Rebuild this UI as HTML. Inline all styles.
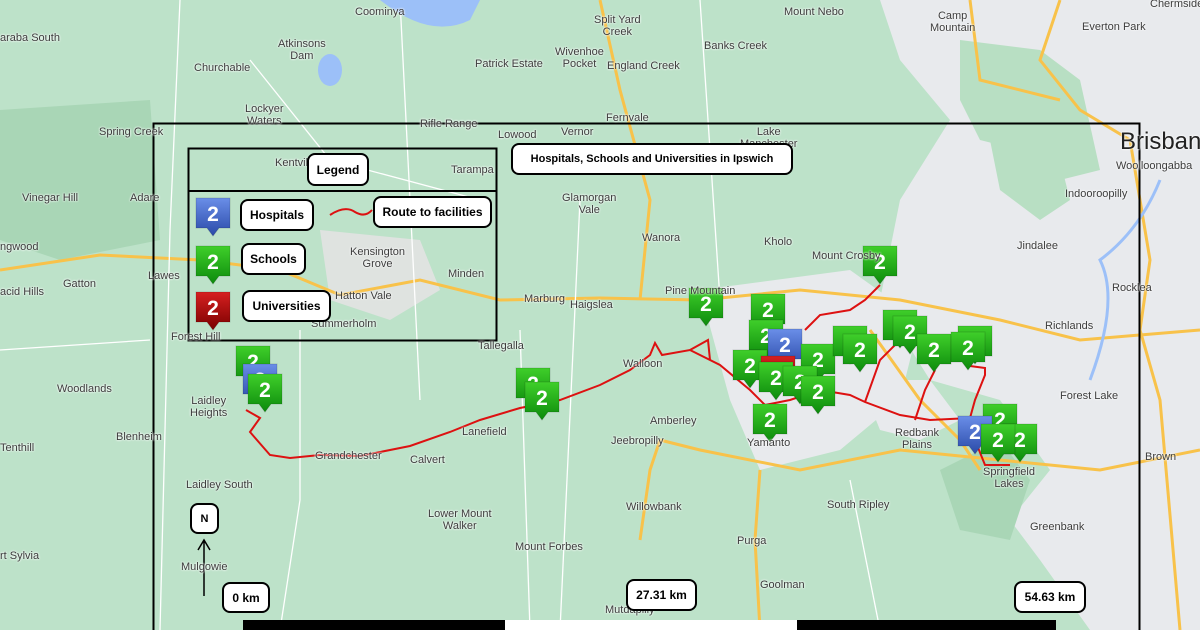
<!DOCTYPE html>
<html><head><meta charset="utf-8"><style>
body{margin:0;width:1200px;height:630px;overflow:hidden;font-family:"Liberation Sans",sans-serif}
.l{position:absolute;font-size:11px;color:#3c3c3c;text-shadow:0 0 2px #fff,0 0 2px #fff;white-space:nowrap;line-height:12px;text-align:center}
.b{position:absolute;background:#fff;border:2px solid #000;border-radius:8px;font-weight:bold;font-size:12px;color:#000;display:flex;align-items:center;justify-content:center;box-sizing:border-box}
</style></head><body>
<svg width="1200" height="630" style="position:absolute;left:0;top:0">
<defs>
<linearGradient id="g" x1="0" y1="0" x2="0" y2="1"><stop offset="0" stop-color="#3fcf2a"/><stop offset="1" stop-color="#0c8a0c"/></linearGradient>
<linearGradient id="bl" x1="0" y1="0" x2="0" y2="1"><stop offset="0" stop-color="#6a8ee8"/><stop offset="1" stop-color="#2a4aa8"/></linearGradient>
<linearGradient id="r" x1="0" y1="0" x2="0" y2="1"><stop offset="0" stop-color="#d62020"/><stop offset="1" stop-color="#7a0000"/></linearGradient>
</defs>
<rect width="1200" height="630" fill="#bde2c9"/>
<path d="M0 110 L150 100 L160 240 L60 260 L0 240Z" fill="#a9d6b6"/>
<path d="M880 0 L1200 0 L1200 630 L1090 630 L1040 560 L1010 520 L1050 470 L1000 400 L930 380 L880 300 L900 200 L950 120 L900 60Z" fill="#e8eaed"/>
<path d="M960 40 L1040 50 L1080 80 L1100 170 L1060 180 L1020 150 L980 140 L960 100Z" fill="#b8dfc3"/>
<path d="M990 140 L1060 160 L1070 200 L1040 220 L1000 190Z" fill="#b8dfc3"/>
<path d="M1050 330 L1120 340 L1140 420 L1100 450 L1060 400Z" fill="#e8eaed"/>
<path d="M700 290 L850 270 L920 320 L900 400 L840 450 L760 470 L730 400Z" fill="#e8eaed"/>
<path d="M860 380 L930 380 L960 420 L920 440 L880 430Z" fill="#e8eaed"/>
<path d="M320 230 L420 240 L440 290 L390 320 L330 300Z" fill="#dfe3e0"/>
<path d="M940 470 L1000 440 L1030 480 L1010 540 L960 530Z" fill="#a9d6b6"/>
<g fill="none" stroke="#f8c24a" stroke-width="3">
<path d="M0 270 L100 255 L200 260 L280 270 L340 295 L420 280 L500 300 L600 298 L700 300 L800 290 L900 300 L1000 320 L1080 340 L1200 330"/>
<path d="M660 440 L700 450 L800 470 L900 450 L1000 460 L1100 470 L1200 450"/>
<path d="M640 540 L650 470 L660 440"/>
<path d="M760 630 L755 540 L760 470"/>
<path d="M640 300 L650 200 L620 90 L600 0"/>
<path d="M870 330 L920 400 L960 440 L980 470"/>
<path d="M1060 0 L1040 60 L1080 110 L1130 140 L1150 260 L1140 330 L1160 400 L1180 630"/>
<path d="M970 0 L980 80 L1060 100"/>
</g>
<g fill="none" stroke="#fff" stroke-width="1.3">
<path d="M180 0 L170 230 L160 630"/><path d="M400 0 L410 200 L420 400"/><path d="M520 330 L530 630"/><path d="M580 200 L560 630"/>
<path d="M0 350 L150 340"/><path d="M300 330 L300 500 L280 630"/><path d="M850 480 L880 630"/><path d="M700 0 L720 300"/><path d="M250 60 L330 160 L480 200"/>
</g>
<path d="M380 0 Q430 40 470 20 L480 0Z" fill="#9cc0f8"/>
<ellipse cx="330" cy="70" rx="12" ry="16" fill="#9cc0f8"/>
<path d="M1090 380 Q1120 300 1100 260 Q1140 230 1160 180" stroke="#9cc0f8" stroke-width="3" fill="none"/>
<g fill="none" stroke="#d11" stroke-width="2">
<path d="M246 410 L260 418 L250 432 L270 455 L290 458 L320 455 L360 456 L410 446 L450 432 L480 420 L520 408 L560 400 L600 385 L630 370 L650 355 L655 343 L662 355 L690 350 L720 365 L750 390 L765 405 L790 400 L820 390 L850 395 L865 402 L900 415 L930 420 L970 418 L975 400 L985 375 L985 368 L970 366"/>
<path d="M690 350 L708 340 L710 360"/>
<path d="M805 330 L820 315 L850 310 L865 300 L880 285"/>
<path d="M865 402 L880 360 L900 340"/>
<path d="M915 420 L925 390 L935 370"/>
<path d="M975 440 L985 465 L1010 465"/>
<path d="M330 215 Q345 205 355 212 Q365 218 372 210"/>
</g>
<rect x="153.5" y="123.5" width="986" height="520" fill="none" stroke="#000" stroke-width="2"/>
<rect x="188.5" y="148.5" width="308" height="192" fill="none" stroke="#000" stroke-width="2"/>
<line x1="188" y1="191" x2="497" y2="191" stroke="#000" stroke-width="2"/>
<rect x="243" y="620" width="262" height="10" fill="#000"/><rect x="505" y="620" width="292" height="10" fill="#fff"/><rect x="797" y="620" width="259" height="10" fill="#000"/>
<path d="M204 596 L204 540 M198 550 L204 540 L210 550" stroke="#000" stroke-width="1.5" fill="none"/>
<g font-family="Liberation Sans" font-weight="bold" font-size="21" fill="#fff" text-anchor="middle" id="m"></g>
</svg>
<script>
var M=[["bl",213,214],["g",213,262],["r",213,308],["g",253,362],["bl",260,380],["g",265,390],["g",533,384],["g",542,398],["g",706,304],["g",768,310],["g",766,336],["bl",785,345],["g",818,360],["g",750,366],["r",778,372],["g",776,378],["g",800,382],["g",818,392],["g",770,420],["g",850,342],["g",860,350],["g",880,262],["g",900,326],["g",910,332],["g",934,350],["g",975,342],["g",968,348],["g",1000,420],["bl",975,432],["g",1020,440],["g",998,440]];
var s="";M.forEach(function(a){var x=a[1],y=a[2];s+='<path d="M'+(x-17)+' '+(y-16)+' h34 v30 h-11 l-6 8 l-6 -8 h-11z" fill="url(#'+a[0]+')" stroke="rgba(0,0,0,.15)"/><text x="'+x+'" y="'+(y+7)+'">2</text>';});
document.getElementById('m').innerHTML=s;
</script>
<div class="l" style="left:355px;top:6px">Coominya</div>
<div class="l" style="left:594px;top:14px">Split Yard<br>Creek</div>
<div class="l" style="left:784px;top:6px">Mount Nebo</div>
<div class="l" style="left:930px;top:10px">Camp<br>Mountain</div>
<div class="l" style="left:1082px;top:21px">Everton Park</div>
<div class="l" style="left:1150px;top:-2px">Chermside</div>
<div class="l" style="left:0px;top:32px">araba South</div>
<div class="l" style="left:278px;top:38px">Atkinsons<br>Dam</div>
<div class="l" style="left:194px;top:62px">Churchable</div>
<div class="l" style="left:475px;top:58px">Patrick Estate</div>
<div class="l" style="left:555px;top:46px">Wivenhoe<br>Pocket</div>
<div class="l" style="left:607px;top:60px">England Creek</div>
<div class="l" style="left:704px;top:40px">Banks Creek</div>
<div class="l" style="left:245px;top:103px">Lockyer<br>Waters</div>
<div class="l" style="left:420px;top:118px">Rifle Range</div>
<div class="l" style="left:498px;top:129px">Lowood</div>
<div class="l" style="left:561px;top:126px">Vernor</div>
<div class="l" style="left:606px;top:112px">Fernvale</div>
<div class="l" style="left:740px;top:126px">Lake<br>Manchester</div>
<div class="l" style="left:99px;top:126px">Spring Creek</div>
<div class="l" style="left:1120px;top:128px;font-size:24px;line-height:28px;color:#222">Brisbane</div>
<div class="l" style="left:1116px;top:160px">Woolloongabba</div>
<div class="l" style="left:22px;top:192px">Vinegar Hill</div>
<div class="l" style="left:130px;top:192px">Adare</div>
<div class="l" style="left:275px;top:157px">Kentville</div>
<div class="l" style="left:451px;top:164px">Tarampa</div>
<div class="l" style="left:562px;top:192px">Glamorgan<br>Vale</div>
<div class="l" style="left:1065px;top:188px">Indooroopilly</div>
<div class="l" style="left:0;top:241px">ngwood</div>
<div class="l" style="left:642px;top:232px">Wanora</div>
<div class="l" style="left:764px;top:236px">Kholo</div>
<div class="l" style="left:812px;top:250px">Mount Crosby</div>
<div class="l" style="left:1017px;top:240px">Jindalee</div>
<div class="l" style="left:350px;top:246px">Kensington<br>Grove</div>
<div class="l" style="left:448px;top:268px">Minden</div>
<div class="l" style="left:148px;top:270px">Lawes</div>
<div class="l" style="left:63px;top:278px">Gatton</div>
<div class="l" style="left:0;top:286px">acid Hills</div>
<div class="l" style="left:1112px;top:282px">Rocklea</div>
<div class="l" style="left:335px;top:290px">Hatton Vale</div>
<div class="l" style="left:524px;top:293px">Marburg</div>
<div class="l" style="left:570px;top:299px">Haigslea</div>
<div class="l" style="left:665px;top:285px">Pine Mountain</div>
<div class="l" style="left:311px;top:318px">Summerholm</div>
<div class="l" style="left:1045px;top:320px">Richlands</div>
<div class="l" style="left:171px;top:331px">Forest Hill</div>
<div class="l" style="left:478px;top:340px">Tallegalla</div>
<div class="l" style="left:623px;top:358px">Walloon</div>
<div class="l" style="left:57px;top:383px">Woodlands</div>
<div class="l" style="left:1060px;top:390px">Forest Lake</div>
<div class="l" style="left:190px;top:395px">Laidley<br>Heights</div>
<div class="l" style="left:650px;top:415px">Amberley</div>
<div class="l" style="left:462px;top:426px">Lanefield</div>
<div class="l" style="left:116px;top:431px">Blenheim</div>
<div class="l" style="left:611px;top:435px">Jeebropilly</div>
<div class="l" style="left:747px;top:437px">Yamanto</div>
<div class="l" style="left:895px;top:427px">Redbank<br>Plains</div>
<div class="l" style="left:0;top:442px">Tenthill</div>
<div class="l" style="left:315px;top:450px">Grandchester</div>
<div class="l" style="left:410px;top:454px">Calvert</div>
<div class="l" style="left:983px;top:466px">Springfield<br>Lakes</div>
<div class="l" style="left:1145px;top:451px">Brown</div>
<div class="l" style="left:186px;top:479px">Laidley South</div>
<div class="l" style="left:626px;top:501px">Willowbank</div>
<div class="l" style="left:827px;top:499px">South Ripley</div>
<div class="l" style="left:428px;top:508px">Lower Mount<br>Walker</div>
<div class="l" style="left:1030px;top:521px">Greenbank</div>
<div class="l" style="left:737px;top:535px">Purga</div>
<div class="l" style="left:515px;top:541px">Mount Forbes</div>
<div class="l" style="left:0;top:550px">rt Sylvia</div>
<div class="l" style="left:181px;top:561px">Mulgowie</div>
<div class="l" style="left:760px;top:579px">Goolman</div>
<div class="l" style="left:605px;top:604px">Mutdapilly</div>
<div class="b" style="left:307px;top:153px;width:62px;height:33px">Legend</div>
<div class="b" style="left:511px;top:143px;width:282px;height:32px;font-size:11px">Hospitals, Schools and Universities in Ipswich</div>
<div class="b" style="left:240px;top:199px;width:74px;height:32px">Hospitals</div>
<div class="b" style="left:373px;top:196px;width:119px;height:32px">Route to facilities</div>
<div class="b" style="left:241px;top:243px;width:65px;height:32px">Schools</div>
<div class="b" style="left:242px;top:290px;width:89px;height:32px">Universities</div>
<div class="b" style="left:190px;top:503px;width:29px;height:31px;font-size:11px">N</div>
<div class="b" style="left:222px;top:582px;width:48px;height:31px">0 km</div>
<div class="b" style="left:626px;top:579px;width:71px;height:32px">27.31 km</div>
<div class="b" style="left:1014px;top:581px;width:72px;height:32px">54.63 km</div>
</body></html>
